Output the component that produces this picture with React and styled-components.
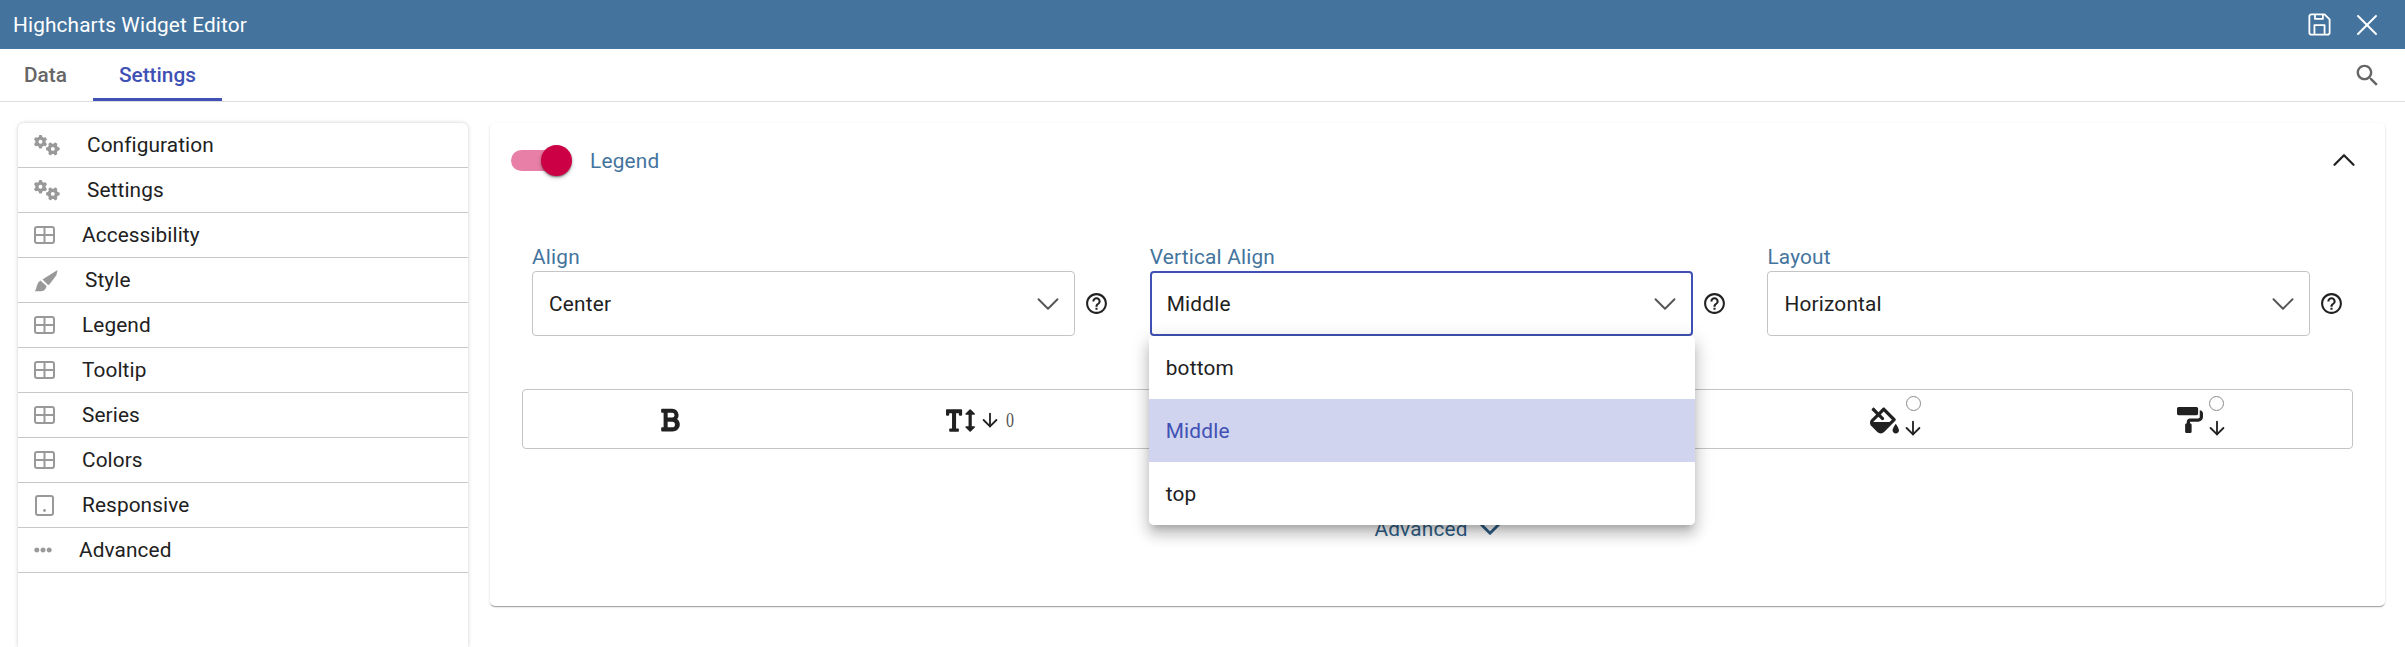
import styled, { createGlobalStyle } from 'styled-components'
import { ArrowDown, ChevronDown, ChevronUp, X } from 'lucide-react'
import { FaBold, FaEllipsisH, FaFillDrip, FaItalic, FaPaintRoller, FaTextHeight, FaUnderline } from 'react-icons/fa'
import { FaGears } from 'react-icons/fa6'

const GlobalStyle = createGlobalStyle`
    html, body {
        margin: 0;
        height: 100%;
        overflow: hidden;
        background: #fff;
        font-family: Roboto, "Liberation Sans", sans-serif;
        font-size: 20.8px;
        color: #212121;
    }
    * { box-sizing: border-box; }
`

const Page = styled.div`
    display: flex;
    flex-direction: column;
    height: 647px;
`

const Header = styled.header`
    display: flex;
    align-items: center;
    justify-content: space-between;
    flex: 0 0 49px;
    padding: 0 20px 0 13px;
    background: #44749d;
    color: #fff;
`

const Title = styled.div`
    font-size: 20.8px;
    letter-spacing: 0.13px;
`

const HeaderActions = styled.div`
    display: flex;
    align-items: center;
    gap: 16px;
`

const TabBar = styled.nav`
    display: flex;
    align-items: stretch;
    justify-content: space-between;
    flex: 0 0 53px;
    padding-right: 23px;
    border-bottom: 1px solid #ddd;
`

const Tabs = styled.div`
    display: flex;
`

const Tab = styled.div`
    display: flex;
    align-items: center;
    padding: 3px 26px 0 ${props => (props.$active ? '26px' : '24px')};
    font-weight: 500;
    color: ${props => (props.$active ? '#3f51b5' : '#666')};
    border-bottom: 3px solid ${props => (props.$active ? '#3f51b5' : 'transparent')};
`

const SearchBox = styled.div`
    display: flex;
    align-items: center;
    color: #666;
`

const Content = styled.main`
    display: flex;
    align-items: stretch;
    gap: 22px;
    flex: 1;
    min-height: 0;
    padding: 21px 21px 0 18px;
`

const Sidebar = styled.aside`
    flex: 0 0 450px;
    border-radius: 6px 6px 0 0;
    box-shadow: 0 0 4px rgba(0, 0, 0, 0.2);
`

const SideRow = styled.div`
    display: flex;
    align-items: center;
    gap: 27px;
    height: 45px;
    padding-left: 16px;
    border-bottom: 1px solid #c8c8c8;
    letter-spacing: 0.1px;
    color: #212121;
    svg { flex: none; color: #999; }
`

const Card = styled.section`
    flex: 1;
    align-self: flex-start;
    height: 483px;
    border-radius: 5px;
    box-shadow: 0 2px 1px -1px rgba(0, 0, 0, 0.2), 0 1px 1px rgba(0, 0, 0, 0.14), 0 1px 3px rgba(0, 0, 0, 0.12);
`

const CardHead = styled.div`
    display: flex;
    align-items: center;
    justify-content: space-between;
    height: 74px;
    padding: 0 22px 0 21px;
`

const HeadLeft = styled.div`
    display: flex;
    align-items: center;
    gap: 18px;
`

const Track = styled.div`
    position: relative;
    width: 56px;
    height: 21px;
    margin-right: 5px;
    border-radius: 11px;
    background: #e87fa6;
`

const Thumb = styled.div`
    position: absolute;
    top: -5px;
    right: -5px;
    width: 31px;
    height: 31px;
    border-radius: 50%;
    background: #cc0044;
    box-shadow: 0 2px 2px -1px rgba(0, 0, 0, 0.3), 0 1px 2px rgba(0, 0, 0, 0.2), 0 2px 4px rgba(0, 0, 0, 0.2);
`

const LegendTitle = styled.div`
    padding-top: 2px;
    color: #44749d;
    letter-spacing: 0.2px;
`

const Fields = styled.div`
    display: grid;
    grid-template-columns: repeat(3, 617.7px);
    margin-top: 50px;
    padding-left: 42px;
`

const FieldLabel = styled.div`
    height: 24px;
    line-height: 20px;
    color: #44749d;
    letter-spacing: 0.2px;
`

const FieldRow = styled.div`
    display: flex;
    align-items: center;
    gap: 9px;
`

const SelectWrap = styled.div`
    position: relative;
    flex: 0 0 543px;
`

const Select = styled.div`
    display: flex;
    align-items: center;
    justify-content: space-between;
    height: 65px;
    padding: 0 7px 0 ${props => (props.$open ? '15px' : '16px')};
    border-radius: 4px;
    border: ${props => (props.$open ? '2px solid #3f51b5' : '1px solid #c4c4c4')};
    letter-spacing: 0.2px;
    svg { color: #555; }
`

const Menu = styled.div`
    position: absolute;
    z-index: 5;
    top: 100%;
    left: -1px;
    right: -2px;
    border-radius: 5px;
    overflow: hidden;
    background: #fff;
    box-shadow: 0 6px 7px -4px rgba(0, 0, 0, 0.2), 0 10px 13px 1px rgba(0, 0, 0, 0.14), 0 4px 18px 3px rgba(0, 0, 0, 0.12);
`

const MenuItem = styled.div`
    display: flex;
    align-items: center;
    height: 63px;
    padding-left: 17px;
    letter-spacing: 0.2px;
    background: ${props => (props.$selected ? '#d0d4ee' : '#fff')};
    color: ${props => (props.$selected ? '#3f51b5' : '#212121')};
`

const HelpIcon = styled.svg`
    flex: none;
    width: 25px;
    height: 25px;
    fill: #212121;
`

const Toolbar = styled.div`
    display: grid;
    grid-template-columns: repeat(6, 1fr);
    height: 60px;
    margin: 53px 32px 0;
    border: 1px solid #c4c4c4;
    border-radius: 4px;
`

const ToolItem = styled.div`
    display: flex;
    align-items: center;
    justify-content: center;
    gap: ${props => props.$gap || 0}px;
    padding: 2px ${props => props.$right || 0}px 0 ${props => props.$left || 0}px;
    color: #212121;
`

const ZeroValue = styled.span`
    width: 10px;
    font-family: "Liberation Serif", serif;
    font-size: 20px;
    color: #555;
    transform: scaleX(0.8);
`

const ColorColumn = styled.div`
    display: flex;
    flex-direction: column;
    align-items: center;
    gap: 6px;
    margin-top: -6px;
`

const ColorDot = styled.div`
    width: 15px;
    height: 15px;
    border-radius: 50%;
    border: 1px solid #8a8a8a;
`

const AdvancedRow = styled.div`
    display: flex;
    align-items: center;
    justify-content: center;
    gap: 5px;
    height: 30px;
    margin-top: 65px;
    padding-left: 6px;
    letter-spacing: 0.2px;
    color: #2f5f88;
`

function GridIcon() {
    return (
        <svg width="21" height="18" viewBox="0 0 21 18" fill="none" stroke="#999" strokeWidth="2">
            <rect x="1" y="1" width="19" height="16" rx="2" />
            <path d="M10.5 1v16M1 9h19" />
        </svg>
    )
}

function TabletIcon() {
    return (
        <svg width="21" height="21" viewBox="0 0 21 21" fill="none" stroke="#999" strokeWidth="2">
            <rect x="2" y="1" width="17" height="19" rx="2" />
            <circle cx="10.5" cy="15.5" r="1.4" fill="#999" stroke="none" />
        </svg>
    )
}

function BrushIcon() {
    return (
        <svg width="24" height="23" viewBox="0 0 24 23" fill="#999">
            <path d="M23.5 1 22.5 6 15 16 13.5 15.5 8.5 10.5Z" />
            <path d="M6.5 11.5 12.5 17C12 21 9 22.3 6 22.3H.5C3 21 2 14 6.5 11.5Z" />
        </svg>
    )
}

function SaveIcon() {
    return (
        <svg width="27" height="27" viewBox="0 0 24 24" fill="none" stroke="#fff" strokeWidth="1.6" strokeLinejoin="round">
            <path d="M5 3h11.5L21 7.5V19a2 2 0 0 1-2 2H5a2 2 0 0 1-2-2V5a2 2 0 0 1 2-2z" />
            <path d="M8 3v4h7V3M7.5 21v-8.5h9V21" />
        </svg>
    )
}

function SearchIcon() {
    return (
        <svg width="29" height="29" viewBox="0 0 24 24" fill="currentColor">
            <path d="M15.5 14h-.79l-.28-.27C15.41 12.59 16 11.11 16 9.5 16 5.91 13.09 3 9.5 3S3 5.91 3 9.5 5.91 16 9.5 16c1.61 0 3.09-.59 4.23-1.57l.27.28v.79l5 4.99L20.49 19l-4.99-5zm-6 0C7.01 14 5 11.99 5 9.5S7.01 5 9.5 5 14 7.01 14 9.5 11.99 14 9.5 14z" />
        </svg>
    )
}

function Help() {
    return (
        <HelpIcon viewBox="0 0 24 24">
            <path d="M11 18h2v-2h-2v2zm1-16C6.48 2 2 6.48 2 12s4.48 10 10 10 10-4.48 10-10S17.52 2 12 2zm0 18c-4.41 0-8-3.59-8-8s3.59-8 8-8 8 3.59 8 8-3.59 8-8 8zm0-14c-2.21 0-4 1.79-4 4h2c0-1.1.9-2 2-2s2 .9 2 2c0 2-3 1.75-3 5h2c0-2.25 3-2.5 3-5 0-2.21-1.79-4-4-4z" />
        </HelpIcon>
    )
}

const sideItems = [
    { label: 'Configuration', icon: <FaGears size={26} /> },
    { label: 'Settings', icon: <FaGears size={26} /> },
    { label: 'Accessibility', icon: <GridIcon /> },
    { label: 'Style', icon: <BrushIcon /> },
    { label: 'Legend', icon: <GridIcon /> },
    { label: 'Tooltip', icon: <GridIcon /> },
    { label: 'Series', icon: <GridIcon /> },
    { label: 'Colors', icon: <GridIcon /> },
    { label: 'Responsive', icon: <TabletIcon /> },
    { label: 'Advanced', icon: <FaEllipsisH size={18} /> },
]

const menuOptions = ['bottom', 'Middle', 'top']

function Field({ label, value, open }) {
    return (
        <div>
            <FieldLabel>{label}</FieldLabel>
            <FieldRow>
                <SelectWrap>
                    <Select $open={open}>
                        {value}
                        <ChevronDown size={38} strokeWidth={1.2} />
                    </Select>
                    {open && (
                        <Menu>
                            {menuOptions.map(option => (
                                <MenuItem key={option} $selected={option === value}>{option}</MenuItem>
                            ))}
                        </Menu>
                    )}
                </SelectWrap>
                <Help />
            </FieldRow>
        </div>
    )
}

function ColorTool({ children }) {
    return (
        <ToolItem $gap={3} $left={5}>
            {children}
            <ColorColumn>
                <ColorDot />
                <ArrowDown size={22} strokeWidth={2} />
            </ColorColumn>
        </ToolItem>
    )
}

function App() {
    return (
        <Page>
            <GlobalStyle />
            <Header>
                <Title>Highcharts Widget Editor</Title>
                <HeaderActions>
                    <SaveIcon />
                    <X size={36} strokeWidth={1.3} />
                </HeaderActions>
            </Header>
            <TabBar>
                <Tabs>
                    <Tab>Data</Tab>
                    <Tab $active>Settings</Tab>
                </Tabs>
                <SearchBox><SearchIcon /></SearchBox>
            </TabBar>
            <Content>
                <Sidebar>
                    {sideItems.map(item => (
                        <SideRow key={item.label}>
                            {item.icon}
                            {item.label}
                        </SideRow>
                    ))}
                </Sidebar>
                <Card>
                    <CardHead>
                        <HeadLeft>
                            <Track><Thumb /></Track>
                            <LegendTitle>Legend</LegendTitle>
                        </HeadLeft>
                        <ChevronUp size={38} strokeWidth={1.4} />
                    </CardHead>
                    <Fields>
                        <Field label="Align" value="Center" />
                        <Field label="Vertical Align" value="Middle" open />
                        <Field label="Layout" value="Horizontal" />
                    </Fields>
                    <Toolbar>
                        <ToolItem $right={10}><FaBold size={26} /></ToolItem>
                        <ToolItem $gap={4}>
                            <FaTextHeight size={29} />
                            <ArrowDown size={22} strokeWidth={2} />
                            <ZeroValue>0</ZeroValue>
                        </ToolItem>
                        <ToolItem><FaItalic size={24} /></ToolItem>
                        <ToolItem><FaUnderline size={24} /></ToolItem>
                        <ColorTool><FaFillDrip size={29} /></ColorTool>
                        <ColorTool><FaPaintRoller size={26} /></ColorTool>
                    </Toolbar>
                    <AdvancedRow>
                        Advanced
                        <ChevronDown size={34} strokeWidth={2} />
                    </AdvancedRow>
                </Card>
            </Content>
        </Page>
    )
}

export default App
